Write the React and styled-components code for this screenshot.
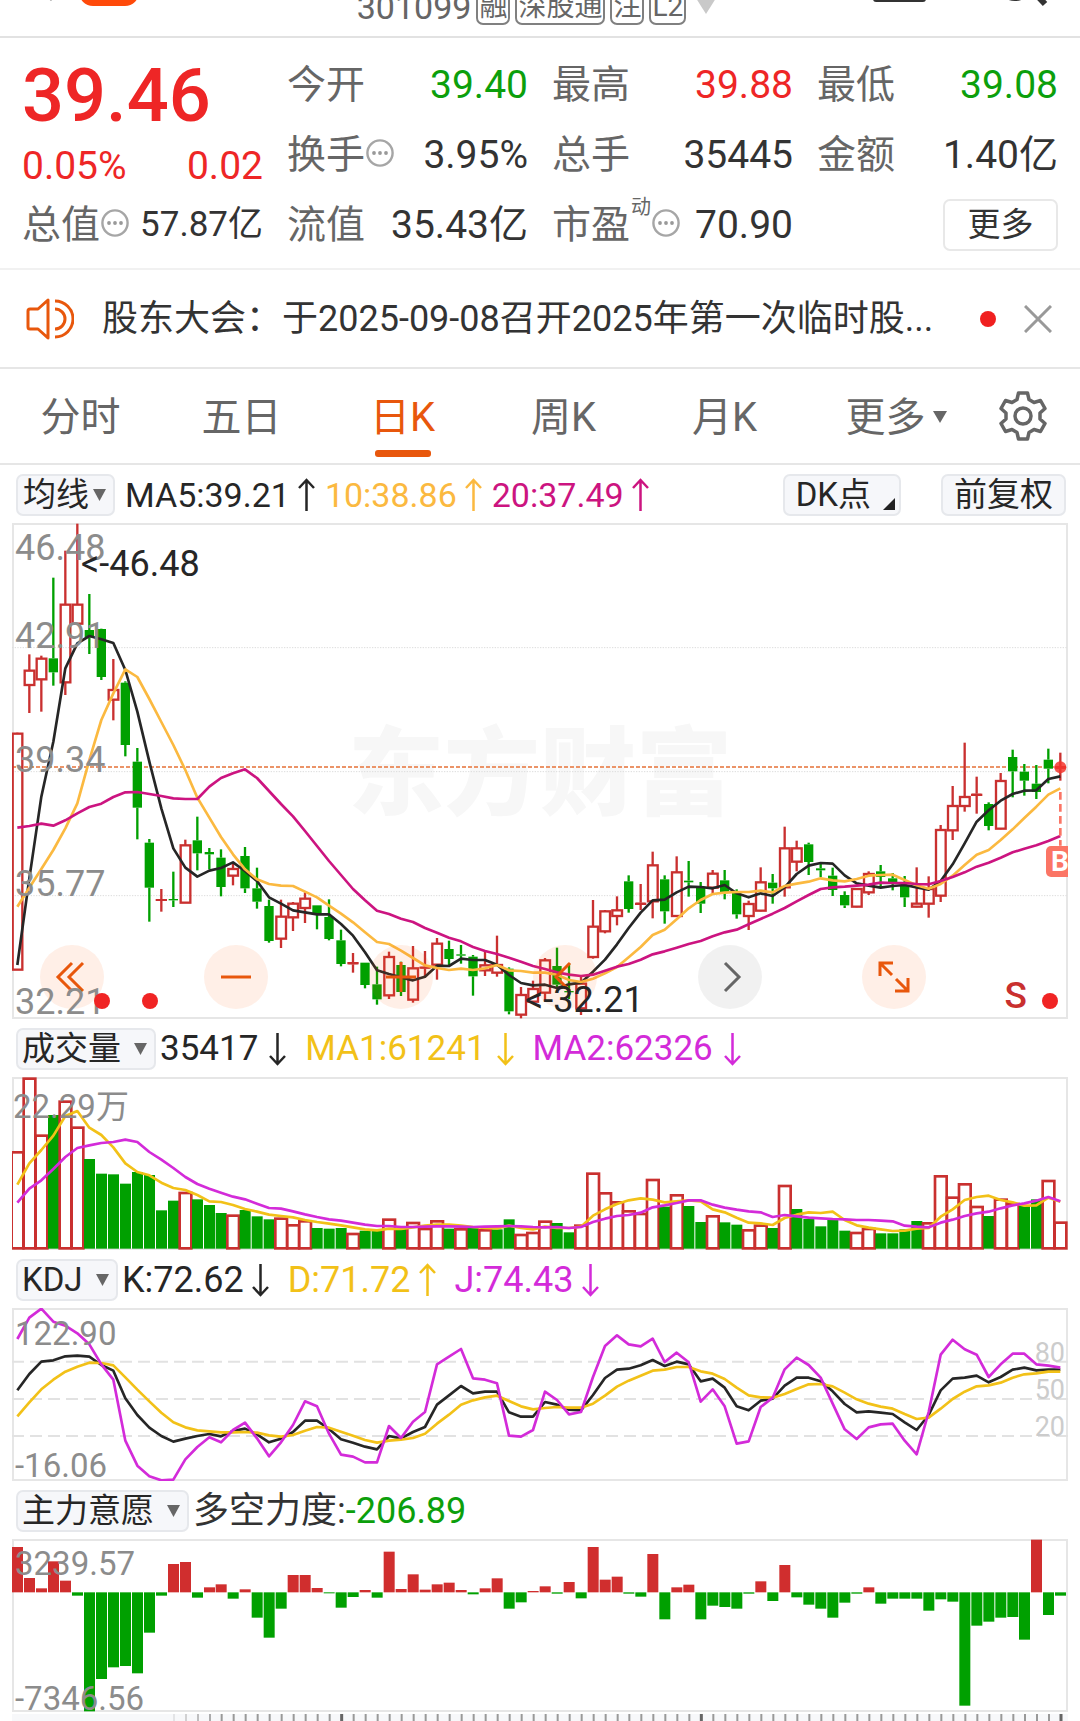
import React from "react";
import styled, { createGlobalStyle, css } from "styled-components";

const color = {
  up: "#c9302f",
  upText: "#ee2626",
  down: "#00a000",
  downText: "#0c9f0c",
  ink: "#262626",
  value: "#333333",
  label: "#666666",
  axis: "#8c8c8c",
  line: "#e6e6e6",
  accent: "#e8570c",
  amber: "#fbb940",
  gold: "#f2c118",
  rose: "#cc1480",
  violet: "#d32bd9",
};

const GlobalStyle = createGlobalStyle`
  *, *::before, *::after { box-sizing: border-box; }
  body {
    margin: 0;
    background: #fff;
    color: ${color.value};
    font-family: Roboto, "Noto Sans CJK SC", sans-serif;
    line-height: 1.2;
  }
  button, select { font-family: inherit; line-height: inherit; margin: 0; cursor: pointer; }
`;

/* ---------- market data, in chart units ---------- */

// [direction, high, body top, body bottom, low]
const CANDLES = [
  ["r", 627, 629, 1338, 1338], ["r", 392, 440, 484, 568], ["r", 396, 404, 467, 564], ["g", 162, 404, 446, 486],
  ["r", 81, 242, 476, 514], ["r", 0, 242, 300, 300], ["g", 211, 319, 341, 391], ["g", 315, 316, 460, 469],
  ["r", 406, 498, 528, 590], ["g", 473, 477, 664, 698], ["g", 673, 714, 852, 947], ["g", 946, 957, 1092, 1194],
  ["r", 1096, 1126, 1132, 1164], ["g", 1044, 1126, 1130, 1150], ["r", 948, 964, 1137, 1138], ["g", 879, 950, 989, 1040],
  ["g", 973, 985, 992, 1037], ["g", 977, 1002, 1090, 1118], ["r", 1016, 1035, 1056, 1085], ["g", 970, 997, 1094, 1108],
  ["g", 1032, 1094, 1134, 1155], ["g", 1128, 1147, 1252, 1257], ["r", 1128, 1178, 1245, 1273], ["r", 1135, 1139, 1181, 1222],
  ["r", 1106, 1124, 1153, 1198], ["g", 1145, 1145, 1174, 1217], ["g", 1127, 1180, 1246, 1250], ["g", 1218, 1250, 1321, 1328],
  ["r", 1288, 1315, 1322, 1347], ["g", 1317, 1317, 1384, 1394], ["g", 1329, 1382, 1427, 1443], ["r", 1284, 1299, 1415, 1426],
  ["g", 1314, 1324, 1405, 1417], ["r", 1267, 1333, 1428, 1437], ["r", 1282, 1329, 1335, 1359], ["r", 1243, 1259, 1323, 1368],
  ["g", 1251, 1276, 1306, 1324], ["g", 1264, 1292, 1296, 1320], ["g", 1294, 1299, 1358, 1416], ["r", 1284, 1324, 1340, 1357],
  ["r", 1236, 1323, 1347, 1359], ["g", 1331, 1335, 1463, 1472], ["r", 1390, 1413, 1473, 1484], ["r", 1371, 1395, 1434, 1439],
  ["r", 1303, 1309, 1407, 1432], ["g", 1272, 1327, 1383, 1391], ["g", 1319, 1402, 1406, 1426], ["r", 1359, 1379, 1454, 1474],
  ["r", 1129, 1208, 1300, 1305], ["r", 1159, 1162, 1223, 1229], ["r", 1118, 1159, 1177, 1205], ["g", 1055, 1073, 1156, 1167],
  ["r", 1081, 1137, 1144, 1159], ["r", 984, 1024, 1133, 1184], ["g", 1055, 1067, 1163, 1200], ["r", 998, 1045, 1177, 1180],
  ["g", 1012, 1071, 1076, 1119], ["g", 1075, 1089, 1140, 1168], ["r", 1039, 1049, 1092, 1109], ["g", 1039, 1070, 1106, 1127],
  ["g", 1097, 1108, 1172, 1185], ["r", 1131, 1140, 1177, 1219], ["r", 1031, 1075, 1161, 1163], ["g", 1051, 1077, 1094, 1140],
  ["r", 909, 973, 1091, 1119], ["r", 951, 973, 1014, 1043], ["g", 957, 962, 1015, 1054], ["g", 1020, 1034, 1040, 1060],
  ["g", 1032, 1056, 1099, 1117], ["g", 1103, 1114, 1145, 1153], ["r", 1094, 1095, 1149, 1151], ["r", 1043, 1050, 1106, 1114],
  ["g", 1024, 1043, 1060, 1089], ["g", 1048, 1064, 1081, 1100], ["g", 1057, 1084, 1121, 1150], ["r", 1031, 1139, 1149, 1151],
  ["r", 1058, 1095, 1140, 1182], ["r", 904, 918, 1116, 1135], ["r", 787, 846, 920, 949], ["r", 657, 819, 847, 864],
  ["r", 759, 810, 817, 870], ["g", 836, 841, 907, 920], ["r", 748, 771, 915, 917], ["g", 678, 700, 743, 821],
  ["g", 721, 744, 771, 816], ["g", 724, 780, 805, 826], ["g", 675, 708, 735, 779], ["r", 687, 727, 735, 771],
];

const MA5 = [1324, 1064, 819, 654, 434, 359, 337, 347, 358, 439, 564, 714, 854, 974, 1032, 1059, 1041, 1033, 1016, 1042, 1072, 1121, 1140, 1160, 1166, 1172, 1172, 1201, 1236, 1286, 1340, 1351, 1361, 1370, 1359, 1326, 1327, 1305, 1309, 1309, 1323, 1354, 1378, 1385, 1383, 1393, 1382, 1377, 1344, 1308, 1262, 1213, 1167, 1130, 1128, 1106, 1089, 1090, 1094, 1084, 1109, 1121, 1109, 1117, 1091, 1051, 1026, 1018, 1020, 1055, 1079, 1086, 1092, 1087, 1084, 1091, 1098, 1072, 1022, 959, 894, 860, 831, 811, 801, 800, 766, 758];
const MA10 = [1149, 1092, 1036, 979, 914, 839, 709, 589, 509, 437, 460, 526, 595, 664, 739, 822, 882, 940, 992, 1037, 1067, 1081, 1086, 1087, 1104, 1121, 1146, 1170, 1196, 1226, 1255, 1261, 1281, 1303, 1325, 1333, 1339, 1335, 1339, 1334, 1324, 1340, 1342, 1347, 1347, 1353, 1369, 1375, 1365, 1349, 1330, 1301, 1270, 1234, 1218, 1187, 1154, 1129, 1111, 1107, 1105, 1105, 1101, 1106, 1087, 1080, 1074, 1064, 1070, 1073, 1066, 1056, 1054, 1053, 1069, 1085, 1095, 1081, 1056, 1024, 993, 979, 949, 917, 883, 849, 813, 794];
const MA20 = [912, 907, 900, 906, 890, 869, 850, 840, 820, 806, 805, 811, 817, 824, 826, 826, 789, 763, 749, 737, 763, 802, 841, 878, 922, 967, 1012, 1054, 1096, 1130, 1161, 1171, 1185, 1195, 1213, 1227, 1242, 1253, 1270, 1282, 1291, 1302, 1314, 1327, 1336, 1346, 1353, 1357, 1353, 1341, 1329, 1321, 1308, 1292, 1283, 1272, 1261, 1252, 1238, 1226, 1218, 1202, 1186, 1170, 1153, 1133, 1114, 1096, 1091, 1089, 1086, 1083, 1077, 1078, 1078, 1081, 1082, 1072, 1060, 1046, 1029, 1017, 1002, 986, 975, 965, 952, 937];

// positive: rising day, negative: falling day
const VOLUME = [291, 512, 341, -401, 443, 365, -269, -225, -223, -195, -230, -221, -115, -144, 169, -148, -131, -107, 101, -116, -97, -88, 92, 72, 84, -62, -60, -62, 46, -54, -53, 89, -59, 79, 61, 84, -60, 60, -62, 57, -58, -88, 43, 49, 83, -77, -49, 71, 227, 168, 141, 114, 106, 208, -126, 162, -128, -80, 99, -79, -72, 57, 71, -62, 190, -119, -89, -67, -88, -54, 49, 61, -46, -46, -58, -83, 78, 219, 155, 195, 127, -98, 149, 136, -128, -148, 205, 80];
const VOL_MA1 = [320, 256, 216, 173, 114, 99, 149, 171, 208, 256, 282, 292, 314, 330, 336, 351, 370, 372, 381, 393, 401, 410, 414, 418, 426, 432, 437, 442, 448, 454, 457, 452, 453, 448, 443, 440, 440, 443, 447, 450, 451, 443, 450, 454, 446, 450, 450, 446, 413, 394, 378, 367, 361, 365, 373, 370, 367, 370, 394, 403, 419, 434, 436, 441, 420, 410, 403, 405, 401, 426, 442, 449, 454, 459, 458, 452, 450, 416, 394, 366, 357, 353, 366, 373, 383, 382, 359, 371];
const VOL_MA2 = [374, 332, 307, 273, 237, 210, 202, 195, 192, 185, 192, 222, 245, 270, 297, 318, 332, 344, 356, 364, 377, 390, 392, 400, 409, 417, 424, 428, 434, 440, 444, 444, 447, 447, 446, 445, 445, 446, 447, 446, 445, 444, 445, 447, 448, 447, 450, 447, 432, 422, 414, 411, 404, 388, 382, 375, 367, 367, 380, 389, 395, 400, 403, 417, 411, 415, 419, 421, 423, 424, 426, 426, 428, 430, 443, 446, 448, 434, 425, 414, 406, 401, 391, 382, 376, 368, 357, 370];

const K_LINE = [246, 197, 160, 156, 144, 142, 145, 170, 187, 270, 320, 358, 383, 400, 391, 383, 377, 384, 368, 361, 378, 402, 391, 371, 337, 337, 362, 393, 403, 415, 423, 383, 390, 371, 356, 289, 261, 233, 255, 250, 250, 312, 325, 325, 281, 289, 304, 306, 260, 209, 184, 181, 171, 155, 173, 160, 168, 219, 211, 238, 294, 306, 277, 271, 232, 208, 208, 219, 249, 287, 312, 309, 313, 317, 342, 365, 320, 246, 211, 208, 202, 222, 206, 184, 178, 186, 184, 184];
const D_LINE = [324, 282, 243, 214, 190, 175, 163, 164, 171, 207, 244, 279, 313, 342, 357, 366, 369, 372, 372, 371, 373, 381, 385, 380, 367, 356, 358, 370, 382, 395, 403, 397, 394, 389, 376, 346, 319, 289, 276, 267, 262, 278, 294, 303, 299, 296, 298, 298, 286, 262, 235, 217, 202, 187, 184, 176, 176, 189, 196, 212, 238, 261, 267, 268, 257, 242, 228, 227, 234, 253, 273, 286, 295, 301, 317, 332, 328, 301, 272, 250, 234, 231, 223, 208, 198, 195, 190, 190];
const J_LINE = [92, 28, 1, 40, 52, 75, 108, 168, 214, 397, 472, 504, 516, 514, 453, 416, 387, 402, 365, 343, 390, 444, 402, 350, 279, 294, 376, 439, 445, 462, 462, 353, 389, 340, 311, 168, 145, 122, 210, 214, 225, 382, 385, 365, 250, 275, 318, 311, 206, 113, 81, 108, 114, 91, 161, 133, 162, 280, 243, 294, 406, 399, 296, 268, 183, 148, 170, 208, 286, 363, 392, 357, 348, 346, 397, 438, 311, 139, 94, 123, 139, 206, 168, 136, 136, 168, 172, 178];

const FORCE = [136, 43, 12, 93, 35, -10, -357, -260, -225, -221, -243, -121, -10, 85, 91, -16, 15, 24, -19, 9, -76, -136, -49, 52, 52, 13, -3, -46, -14, 7, -16, 122, 10, 54, 8, 24, 29, 7, -6, 12, 42, -49, -30, 4, 18, -4, 31, -18, 136, 38, 47, -4, -13, 115, -81, 15, 23, -81, -40, -44, -49, -4, 33, -26, 82, -15, -37, -49, -76, -31, -4, 15, -34, -19, -19, -19, -55, -21, -28, -340, -100, -88, -76, -74, -142, 158, -68, -10];

const VIEW_W = 3168;
const xAt = (i) => Math.round(16 + i * 35.97);
const toPoints = (series) => series.map((y, i) => `${xAt(i)},${y}`).join(" ");

/* ---------- page header ---------- */

const Page = styled.main`
  min-width: 1000px;
  overflow: hidden;
`;

const TopBar = styled.header`
  display: grid;
  grid-template-columns: 1fr auto 1fr;
  align-items: end;
  align-content: end;
  height: 38px;
  padding: 0 24px;
  border-bottom: 2px solid #e2e2e2;
  overflow: hidden;
`;

const TopSide = styled.div`
  display: flex;
  align-items: flex-end;
  justify-content: ${(p) => (p.$end ? "flex-end" : "flex-start")};
  gap: ${(p) => (p.$end ? "76px" : "26px")};
  height: 36px;
`;

const IconButton = styled.button`
  display: grid;
  place-items: center;
  padding: 0;
  border: 0;
  background: none;
`;

const StockMeta = styled.div`
  display: flex;
  align-items: center;
  gap: 5px;
  padding: 0 0 11px;
  color: ${color.label};
  font-size: 34px;
  line-height: 36px;
`;

const Tag = styled.span`
  padding: 0 1px;
  border: 2px solid #808080;
  border-radius: 7px;
  font-size: 28px;
  line-height: 32px;
`;

/* ---------- quote ---------- */

const Quote = styled.section`
  display: grid;
  grid-template-columns: repeat(4, 1fr);
  grid-template-rows: repeat(3, 70px);
  column-gap: 24px;
  padding: 12px 22px 8px;
  border-bottom: 2px solid #f1f1f1;
`;

const PriceBlock = styled.div`
  grid-row: span 2;
  color: ${color.upText};
`;

const Price = styled.div`
  font-size: 74px;
  font-weight: 500;
  line-height: 92px;
`;

const Change = styled.div`
  display: flex;
  justify-content: space-between;
  font-size: 39px;
  line-height: 48px;
`;

const Stat = styled.div`
  display: flex;
  align-items: center;
  justify-content: space-between;
  white-space: nowrap;
`;

const StatLabel = styled.span`
  display: flex;
  align-items: center;
  color: ${color.label};
  font-size: 39px;
  line-height: 56px;
`;

const StatMark = styled.sup`
  align-self: flex-start;
  margin-left: 1px;
  font-size: 20px;
  line-height: 20px;
`;

const InfoButton = styled(IconButton)`
  padding: 0 0 4px 1px;
`;

const StatValue = styled.span`
  color: ${(p) => p.$color || color.value};
  font-size: ${(p) => (p.$compact ? "35px" : "39px")};
  line-height: 48px;
`;

const MoreButton = styled.button`
  align-self: center;
  justify-self: end;
  width: 115px;
  height: 52px;
  border: 2px solid #e8e8e8;
  border-radius: 7px;
  background: #fff;
  color: ${color.value};
  font-size: 33px;
  padding: 0;
`;

function Info() {
  return (
    <InfoButton type="button" aria-label="说明">
      <svg width="28" height="28" viewBox="0 0 28 28">
        <circle cx="14" cy="14" r="12.6" fill="none" stroke="#a6a6a6" strokeWidth="2.4" />
        <circle cx="8" cy="14" r="1.9" fill="#999" />
        <circle cx="14" cy="14" r="1.9" fill="#999" />
        <circle cx="20" cy="14" r="1.9" fill="#999" />
      </svg>
    </InfoButton>
  );
}

function StatItem({ label, mark, info, value, tone, compact }) {
  return (
    <Stat>
      <StatLabel>
        {label}
        {mark && <StatMark>{mark}</StatMark>}
        {info && <Info />}
      </StatLabel>
      <StatValue $color={tone} $compact={compact}>{value}</StatValue>
    </Stat>
  );
}

/* ---------- notice ---------- */

const Notice = styled.section`
  display: flex;
  align-items: center;
  height: 99px;
  padding: 0 28px 0 26px;
  border-bottom: 2px solid #e6e6e6;
`;

const NoticeLink = styled.a`
  flex: 1;
  min-width: 0;
  margin-left: 28px;
  overflow: hidden;
  white-space: nowrap;
  color: ${color.value};
  font-size: 36px;
  line-height: 48px;
  text-decoration: none;
`;

const UnreadDot = styled.i`
  width: 16px;
  height: 16px;
  margin-right: 28px;
  border-radius: 50%;
  background: #f02020;
`;

/* ---------- period tabs ---------- */

const Tabs = styled.nav`
  display: grid;
  grid-template-columns: repeat(6, 161fr) 114fr;
  height: 96px;
  border-bottom: 2px solid #e6e6e6;
`;

const Tab = styled.button`
  position: relative;
  padding: 4px 0 0;
  border: 0;
  background: none;
  color: ${(p) => (p.$active ? color.accent : color.label)};
  font-size: 40px;
  ${(p) =>
    p.$active &&
    css`
      &::after {
        content: "";
        position: absolute;
        left: calc(50% - 28px);
        bottom: 6px;
        width: 56px;
        height: 7px;
        border-radius: 3px;
        background: ${color.accent};
      }
    `}
`;

const TabArrow = styled.svg`
  position: absolute;
  left: calc(50% + 47px);
  top: 42px;
`;

/* ---------- indicator rows ---------- */

const IndicatorRow = styled.div`
  display: flex;
  align-items: center;
  gap: 4px;
  height: 58px;
  padding: 2px 14px 0 16px;
`;

const chip = css`
  height: 42px;
  border: 2px solid #e6e8ec;
  border-radius: 7px;
  background: #f6f7fa;
  color: ${color.ink};
  font-size: 33px;
  line-height: 38px;
`;

const SelectWrap = styled.label`
  position: relative;
  display: block;
`;

const Select = styled.select`
  ${chip}
  display: block;
  appearance: none;
  padding: 0 ${(p) => (p.$tight ? "24px" : "33px")} 0 ${(p) => (p.$tight ? "5px" : "4px")};
  outline: none;
`;

const SelectArrow = styled.svg`
  position: absolute;
  right: 9px;
  top: 15px;
  pointer-events: none;
`;

const ChipButton = styled.button`
  ${chip}
  display: flex;
  justify-content: center;
  align-items: center;
  gap: 12px;
  padding: 0 ${(p) => (p.$corner ? "4px" : "11px")} 0 11px;
`;

const ChipGroup = styled.div`
  display: flex;
  gap: 40px;
  margin-left: auto;
`;

const Readings = styled.div`
  display: flex;
  align-items: center;
  gap: ${(p) => (p.$tight ? 10 : 19)}px;
  margin-left: ${(p) => (p.$tight ? 6 : 0)}px;
  font-size: ${(p) => p.$size}px;
  line-height: 42px;
  white-space: nowrap;
`;

const Reading = styled.span`
  display: flex;
  align-items: center;
  gap: ${(p) => (p.$wide ? 11 : 8)}px;
  color: ${(p) => p.$color};
`;

const Signed = styled.span`
  color: ${color.downText};
`;

function Arrow({ up }) {
  return (
    <svg width="17" height="34" viewBox="0 0 17 34" fill="none" stroke="currentColor" strokeWidth="2.5">
      {up ? <path d="M8.5 33V2M1 10l7.5-8 7.5 8" /> : <path d="M8.5 1v31M1 24l7.5 8 7.5-8" />}
    </svg>
  );
}

function IndicatorSelect({ name, label, tight }) {
  return (
    <SelectWrap>
      <Select aria-label={label} defaultValue={name} $tight={tight}>
        <option>{name}</option>
      </Select>
      <SelectArrow width="13" height="12" viewBox="0 0 13 12">
        <path d="M0 0h13L6.5 12z" fill="#666" />
      </SelectArrow>
    </SelectWrap>
  );
}

/* ---------- charts ---------- */

const Plot = styled.div`
  position: relative;
  height: ${(p) => p.$height}px;
  margin: 0 12px;
  box-shadow: inset 0 0 0 2px ${color.line};
  overflow: hidden;
`;

const Canvas = styled.svg`
  position: relative;
  display: block;
  width: 100%;
  height: 100%;
`;

const Watermark = styled.div`
  position: absolute;
  left: 0;
  right: 0;
  top: 188px;
  text-align: center;
  color: #f7f7f7;
  font-family: "Noto Sans CJK SC", sans-serif;
  font-size: 96px;
  font-weight: 900;
  line-height: 110px;
`;

const AxisLabel = styled.span`
  position: absolute;
  left: ${(p) => p.$x ?? 3}px;
  top: ${(p) => p.$y}px;
  color: ${(p) => p.$color || color.axis};
  font-size: ${(p) => p.$size || 33}px;
  line-height: 40px;
`;

const LevelLabel = styled.span`
  position: absolute;
  right: 3px;
  top: ${(p) => p.$y}px;
  color: #cccccc;
  font-size: 27px;
  line-height: 30px;
`;

const Controls = styled.div`
  position: absolute;
  left: 28px;
  right: 142px;
  bottom: 10px;
  display: flex;
  justify-content: space-between;
`;

const RoundButton = styled.button`
  display: grid;
  place-items: center;
  width: 64px;
  height: 64px;
  padding: 0;
  border: 0;
  border-radius: 50%;
  background: ${(p) => (p.$muted ? "rgba(0,0,0,.055)" : "rgba(255,100,20,.1)")};
  color: ${(p) => (p.$muted ? "#666" : color.accent)};
`;

const EventDot = styled.i`
  position: absolute;
  left: ${(p) => p.$x}px;
  bottom: 10px;
  width: 16px;
  height: 16px;
  border-radius: 50%;
  background: #f02424;
`;

const SellMark = styled.span`
  position: absolute;
  right: 41px;
  bottom: 3px;
  color: #c9302f;
  font-size: 37px;
  font-weight: 500;
  line-height: 40px;
`;

const BuyMark = styled.span`
  position: absolute;
  right: -9px;
  bottom: 142px;
  width: 31px;
  height: 31px;
  padding-left: 5px;
  border-radius: 5px;
  background: #fb7565;
  color: #fff;
  font-size: 28px;
  font-weight: 700;
  line-height: 31px;
`;

function Series({ data, stroke }) {
  return <polyline points={toPoints(data)} fill="none" stroke={stroke} strokeWidth="8" strokeLinejoin="round" />;
}

function CandleChart() {
  return (
    <Canvas viewBox={`0 -2 ${VIEW_W} 1488`} preserveAspectRatio="none">
      {[372, 744, 1116].map((y) => (
        <line key={y} x1="0" x2={VIEW_W} y1={y} y2={y} stroke="#dcdcdc" strokeWidth="3" strokeDasharray="4 4" />
      ))}
      <line x1="0" x2={VIEW_W} y1="730" y2="730" stroke="#eb9468" strokeWidth="6" strokeDasharray="12 6" />
      {CANDLES.map(([dir, high, top, bottom, low], i) => {
        const x = xAt(i);
        const solid = dir === "g" || bottom - top < 9;
        const stroke = dir === "g" ? color.down : color.up;
        return (
          <g key={i} stroke={stroke} strokeWidth="7" fill={stroke}>
            {high < top && <line x1={x} x2={x} y1={high} y2={top} />}
            {low > bottom && <line x1={x} x2={x} y1={bottom} y2={low} />}
            {solid ? (
              <rect x={x - 14} y={top} width="28" height={bottom - top} stroke="none" />
            ) : (
              <rect x={x - 14} y={top + 1} width="29" height={bottom - top - 1} fill="none" />
            )}
            {solid && dir === "r" && <rect x={x - 17} y={top} width="34" height={bottom - top} stroke="none" />}
          </g>
        );
      })}
      <Series data={MA5} stroke={color.ink} />
      <Series data={MA10} stroke={color.amber} />
      <Series data={MA20} stroke={color.rose} />
      <line x1="3145" x2="3145" y1="805" y2="966" stroke="#fb7565" strokeWidth="8" strokeDasharray="23 13" />
      <circle cx="3145" cy="731" r="18" fill="#f5352b" fillOpacity=".85" />
    </Canvas>
  );
}

function VolumeChart() {
  return (
    <Canvas viewBox={`0 -3 ${VIEW_W} 519`} preserveAspectRatio="none">
      {VOLUME.map((v, i) =>
        v < 0 ? (
          <rect key={i} x={xAt(i) - 16} y={512 + v} width="33" height={-v} fill={color.down} />
        ) : (
          <rect key={i} x={xAt(i) - 17} y={514 - v} width="35" height={v - 3} fill="#fff" stroke={color.up} strokeWidth="8" />
        )
      )}
      <Series data={VOL_MA1} stroke={color.gold} />
      <Series data={VOL_MA2} stroke={color.violet} />
    </Canvas>
  );
}

function KdjChart() {
  return (
    <Canvas viewBox={`0 -1 ${VIEW_W} 519`} preserveAspectRatio="none">
      {[160, 272, 383].map((y) => (
        <line key={y} x1="0" x2={VIEW_W} y1={y} y2={y} stroke="#e2e2e2" strokeWidth="6" strokeDasharray="36 18" />
      ))}
      <Series data={K_LINE} stroke={color.ink} />
      <Series data={D_LINE} stroke={color.gold} />
      <Series data={J_LINE} stroke={color.violet} />
    </Canvas>
  );
}

function ForceChart() {
  return (
    <Canvas viewBox={`0 -2 ${VIEW_W} 519`} preserveAspectRatio="none">
      {FORCE.map((v, i) => (
        <rect
          key={i}
          x={xAt(i) - 16}
          y={v > 0 ? 158 - v : 158}
          width="33"
          height={Math.abs(v)}
          fill={v > 0 ? "#d02e2e" : color.down}
        />
      ))}
    </Canvas>
  );
}

const Ruler = styled.div`
  height: 7px;
  margin: 2px 12px 0;
  background: #f7f8fa;
`;

function RulerTicks() {
  return (
    <Ruler>
      <Canvas viewBox={`0 0 ${VIEW_W} 21`} preserveAspectRatio="none">
        {VOLUME.map((_, i) => {
          const major = i % 30 === 27;
          return i < 13 ? null : (
            <line
              key={i}
              x1={xAt(i) + 2}
              x2={xAt(i) + 2}
              y1="0"
              y2="21"
              stroke={major ? "#666" : "#999"}
              strokeWidth={major ? 9 : 6}
              opacity={Math.min(1, (i - 12) / 5)}
            />
          );
        })}
      </Canvas>
    </Ruler>
  );
}

const ctl = { width: 34, height: 34, viewBox: "0 0 34 34", fill: "none", stroke: "currentColor", strokeWidth: 3 };

export default function App() {
  return (
    <>
      <GlobalStyle />
      <Page>
        <TopBar>
          <TopSide>
            <IconButton type="button" aria-label="返回">
              <svg width="29" height="36" viewBox="0 0 29 36" fill="none" stroke="#999" strokeWidth="3">
                <path d="M28 0L8-18" />
              </svg>
            </IconButton>
            <IconButton type="button" aria-label="首页">
              <svg width="60" height="36" viewBox="0 0 60 36">
                <rect y="-40" width="60" height="46" rx="14" fill="#ff4a0a" />
              </svg>
            </IconButton>
          </TopSide>
          <StockMeta>
            301099
            <Tag>融</Tag>
            <Tag>深股通</Tag>
            <Tag>注</Tag>
            <Tag>L2</Tag>
            <svg width="32" height="24" viewBox="0 0 32 24">
              <path d="M3 0h24L15 19z" fill="#c9c9c9" />
            </svg>
          </StockMeta>
          <TopSide $end>
            <IconButton type="button" aria-label="自选">
              <svg width="53" height="36" viewBox="0 0 53 36">
                <rect y="-30" width="53" height="32" rx="3" fill="#333" />
              </svg>
            </IconButton>
            <IconButton type="button" aria-label="搜索">
              <svg width="54" height="36" viewBox="0 0 54 36" fill="none" stroke="#333" strokeWidth="4">
                <circle cx="13" cy="-18" r="17" />
                <path d="M30-10l13 14" strokeWidth="6" />
              </svg>
            </IconButton>
          </TopSide>
        </TopBar>

        <Quote>
          <PriceBlock>
            <Price>39.46</Price>
            <Change>
              <span>0.05%</span>
              <span>0.02</span>
            </Change>
          </PriceBlock>
          <StatItem label="今开" value="39.40" tone={color.downText} />
          <StatItem label="最高" value="39.88" tone={color.upText} />
          <StatItem label="最低" value="39.08" tone={color.downText} />
          <StatItem label="换手" info value="3.95%" />
          <StatItem label="总手" value="35445" />
          <StatItem label="金额" value="1.40亿" />
          <StatItem label="总值" info value="57.87亿" compact />
          <StatItem label="流值" value="35.43亿" />
          <StatItem label="市盈" mark="动" info value="70.90" />
          <MoreButton type="button">更多</MoreButton>
        </Quote>

        <Notice>
          <svg width="48" height="42" viewBox="0 0 48 42" fill="none" stroke={color.accent} strokeWidth="3" strokeLinejoin="round">
            <path d="M22 2v38L12 31H4q-2 0-2-2V13q0-2 2-2h8z" />
            <path d="M29 11a10 10 0 0 1 0 20M29 3a18 18 0 0 1 0 36" />
          </svg>
          <NoticeLink href="#notice">股东大会：于2025-09-08召开2025年第一次临时股...</NoticeLink>
          <UnreadDot />
          <IconButton type="button" aria-label="关闭">
            <svg width="28" height="28" viewBox="0 0 28 28" stroke="#999" strokeWidth="3">
              <path d="M1 1l26 26M27 1L1 27" />
            </svg>
          </IconButton>
        </Notice>

        <Tabs>
          <Tab type="button">分时</Tab>
          <Tab type="button">五日</Tab>
          <Tab type="button" $active aria-current="true">日K</Tab>
          <Tab type="button">周K</Tab>
          <Tab type="button">月K</Tab>
          <Tab type="button">
            更多
            <TabArrow width="14" height="12" viewBox="0 0 14 12">
              <path d="M0 0h14L7 12z" fill="#666" />
            </TabArrow>
          </Tab>
          <IconButton type="button" aria-label="设置">
            <svg width="48" height="50" viewBox="0 0 48 50" fill="none" stroke="#666" strokeWidth="3.5" strokeLinejoin="round">
              <path d="M19.5 2h9l1.5 6.5 5 3 6.5-2 4.5 8-5 4.5v6l5 4.5-4.5 8-6.5-2-5 3-1.5 6.5h-9L18 41.5l-5-3-6.5 2-4.5-8L7 28v-6l-5-4.5 4.5-8 6.5 2 5-3z" />
              <circle cx="24" cy="25" r="8" />
            </svg>
          </IconButton>
        </Tabs>

        <IndicatorRow>
          <IndicatorSelect name="均线" label="主图指标" tight />
          <Readings $size={34} $tight>
            <Reading $color={color.ink}>MA5:39.21<Arrow up /></Reading>
            <Reading $color={color.amber}>10:38.86<Arrow up /></Reading>
            <Reading $color={color.rose}>20:37.49<Arrow up /></Reading>
          </Readings>
          <ChipGroup>
            <ChipButton type="button" $corner>
              DK点
              <svg width="12" height="30" viewBox="0 0 12 30">
                <path d="M12 18v12H0z" fill="#222" />
              </svg>
            </ChipButton>
            <ChipButton type="button">前复权</ChipButton>
          </ChipGroup>
        </IndicatorRow>

        <Plot $height={496}>
          <Watermark aria-hidden="true">东方财富</Watermark>
          <CandleChart />
          <Controls>
            <RoundButton type="button" aria-label="最早">
              <svg {...ctl}><path d="M17 3L3 17l14 14M28 3L14 17l14 14" /></svg>
            </RoundButton>
            <RoundButton type="button" aria-label="缩小">
              <svg {...ctl}><path d="M2 17h30" /></svg>
            </RoundButton>
            <RoundButton type="button" aria-label="放大">
              <svg {...ctl}><path d="M2 17h30M17 2v30" /></svg>
            </RoundButton>
            <RoundButton type="button" aria-label="左移">
              <svg {...ctl}><path d="M22 3L8 17l14 14" /></svg>
            </RoundButton>
            <RoundButton type="button" aria-label="右移" $muted>
              <svg {...ctl}><path d="M12 3l14 14-14 14" /></svg>
            </RoundButton>
            <RoundButton type="button" aria-label="全屏">
              <svg {...ctl}><path d="M3 16V3h13M3 3l12 12M31 18v13H18M31 31L19 19" /></svg>
            </RoundButton>
          </Controls>
          <AxisLabel $y={5} $size={36}>46.48</AxisLabel>
          <AxisLabel $y={93} $size={36}>42.91</AxisLabel>
          <AxisLabel $y={217} $size={36}>39.34</AxisLabel>
          <AxisLabel $y={341} $size={36}>35.77</AxisLabel>
          <AxisLabel $y={459} $size={36}>32.21</AxisLabel>
          <AxisLabel $x={69} $y={21} $size={36} $color={color.ink}>&lt;-46.48</AxisLabel>
          <AxisLabel $x={513} $y={457} $size={36} $color={color.ink}>&lt;-32.21</AxisLabel>
          <EventDot $x={82} />
          <EventDot $x={130} />
          <EventDot $x={1030} />
          <SellMark>S</SellMark>
          <BuyMark>B</BuyMark>
        </Plot>

        <IndicatorRow>
          <IndicatorSelect name="成交量" label="副图指标一" />
          <Readings $size={35}>
            <Reading $wide $color={color.ink}>35417<Arrow /></Reading>
            <Reading $wide $color={color.gold}>MA1:61241<Arrow /></Reading>
            <Reading $wide $color={color.violet}>MA2:62326<Arrow /></Reading>
          </Readings>
        </IndicatorRow>
        <Plot $height={173}>
          <VolumeChart />
          <AxisLabel $x={1} $y={10}>22.29万</AxisLabel>
        </Plot>

        <IndicatorRow>
          <IndicatorSelect name="KDJ" label="副图指标二" />
          <Readings $size={36}>
            <Reading $color={color.ink}>K:72.62<Arrow /></Reading>
            <Reading $color={color.gold}>D:71.72<Arrow up /></Reading>
            <Reading $color={color.violet}>J:74.43<Arrow /></Reading>
          </Readings>
        </IndicatorRow>
        <Plot $height={173}>
          <KdjChart />
          <AxisLabel $y={6}>122.90</AxisLabel>
          <AxisLabel $y={138}>-16.06</AxisLabel>
          <LevelLabel $y={30}>80</LevelLabel>
          <LevelLabel $y={67}>50</LevelLabel>
          <LevelLabel $y={104}>20</LevelLabel>
        </Plot>

        <IndicatorRow>
          <IndicatorSelect name="主力意愿" label="副图指标三" />
          <Readings $size={36}>
            <span>
              多空力度:<Signed>-206.89</Signed>
            </span>
          </Readings>
        </IndicatorRow>
        <Plot $height={173}>
          <ForceChart />
          <AxisLabel $y={5}>3239.57</AxisLabel>
          <AxisLabel $y={140}>-7346.56</AxisLabel>
        </Plot>
        <RulerTicks />
      </Page>
    </>
  );
}
